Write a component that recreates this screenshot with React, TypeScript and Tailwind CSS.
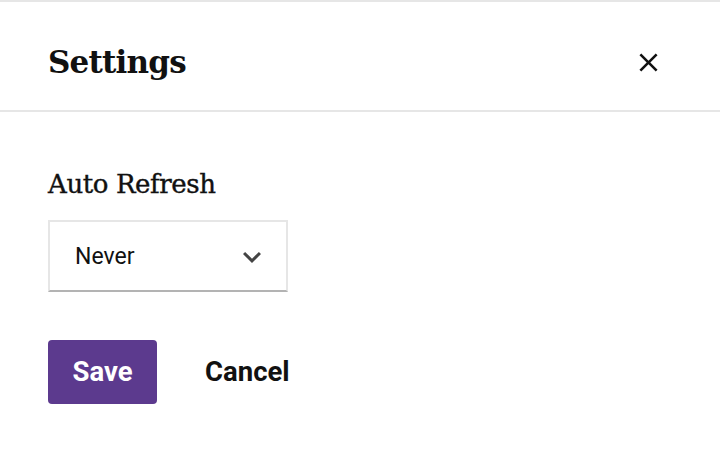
export default function App() {
  return (
    <div className="w-[720px] h-[452px] bg-white border-t-2 border-[#e6e6e6] font-['Roboto',sans-serif] text-[#111]">
      {/* header */}
      <div className="h-[110px] flex items-center justify-between pl-12 pr-[56px] pt-3 border-b-2 border-[#e6e6e6]">
        <h2 className="text-[31px] font-bold font-['DejaVu_Serif',serif] tracking-[-0.8px] leading-none">Settings</h2>
        <button className="text-[#111]">
          <svg width="31" height="31" viewBox="0 0 24 24" fill="currentColor">
            <path d="M19 6.41L17.59 5 12 10.59 6.41 5 5 6.41 10.59 12 5 17.59 6.41 19 12 13.41 17.59 19 19 17.59 13.41 12z" />
          </svg>
        </button>
      </div>

      {/* body */}
      <div className="px-12 pt-[56px]">
        <label className="block text-[26px] font-['DejaVu_Serif',serif] tracking-[-0.4px] leading-[32px] [-webkit-text-stroke:0.4px_#111]">
          Auto Refresh
        </label>
        <div className="mt-[20px] w-[240px] h-[72px] border-2 border-[#e6e6e6] border-b-[#b3b3b3] flex items-center justify-between pl-[25px] pr-[16px]">
          <span className="text-[23px] mt-[3px]">Never</span>
          <svg width="36" height="36" viewBox="0 0 24 24" fill="#444" className="mt-[2px]">
            <path d="M16.59 8.59L12 13.17 7.41 8.59 6 10l6 6 6-6z" />
          </svg>
        </div>
        <div className="mt-12 flex items-center gap-12">
          <button className="w-[109px] h-16 rounded bg-[#5c3a8e] text-white text-[27.5px] font-bold">Save</button>
          <button className="text-[27.5px] font-bold">Cancel</button>
        </div>
      </div>
    </div>
  );
}
